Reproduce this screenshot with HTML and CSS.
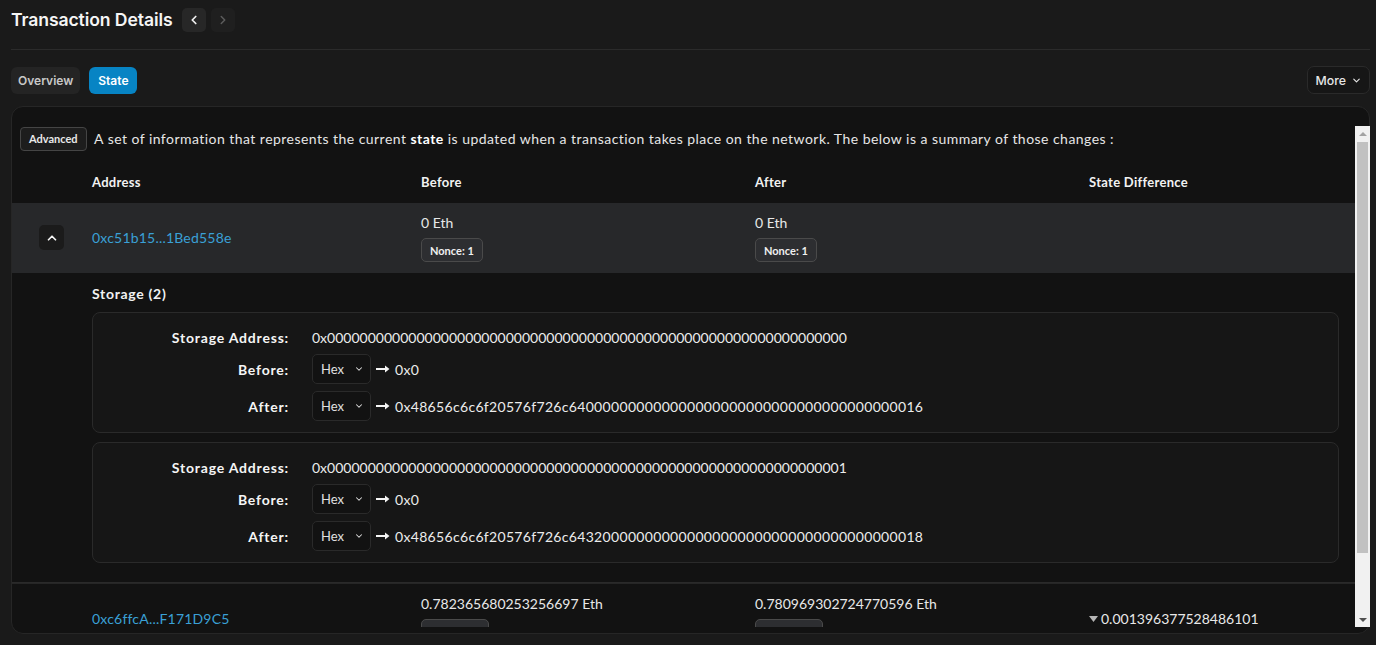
FILE: index.html
```html
<!DOCTYPE html>
<html lang="en">
<head>
<meta charset="utf-8">
<title>Transaction Details</title>
<link rel="stylesheet" href="styles.css">
</head>
<body>
<div class="page">
  <header class="page-head">
    <h1 class="title">Transaction Details</h1>
    <button class="nav-btn">
      <svg width="14" height="14" viewBox="0 0 24 24"><path d="M15 18l-6-6 6-6" fill="none" stroke="currentColor" stroke-width="3" stroke-linecap="round" stroke-linejoin="round"/></svg>
    </button>
    <button class="nav-btn nav-btn-off">
      <svg width="14" height="14" viewBox="0 0 24 24"><path d="M9 18l6-6-6-6" fill="none" stroke="currentColor" stroke-width="2.5" stroke-linecap="round" stroke-linejoin="round"/></svg>
    </button>
  </header>

  <div class="tabs-row">
    <div class="tabs">
      <button class="tab">Overview</button>
      <button class="tab tab-active">State</button>
    </div>
    <button class="more">More
      <svg width="11" height="11" viewBox="0 0 24 24"><path d="M6 9l6 6 6-6" fill="none" stroke="currentColor" stroke-width="2.5" stroke-linecap="round" stroke-linejoin="round"/></svg>
    </button>
  </div>

  <section class="card">
    <div class="card-body">
      <div class="scroll">
        <p class="intro"><span class="badge">Advanced</span> A set of information that represents the current <b>state</b> is updated when a transaction takes place on the network. The below is a summary of those changes :</p>

        <div class="grid head-row">
          <div></div>
          <div>Address</div>
          <div>Before</div>
          <div>After</div>
          <div>State Difference</div>
        </div>

        <div class="grid acc-row acc-open">
          <div class="cell-center">
            <button class="expand">
              <svg width="14" height="14" viewBox="0 0 24 24"><path d="M18 15l-6-6-6 6" fill="none" stroke="currentColor" stroke-width="3" stroke-linecap="round" stroke-linejoin="round"/></svg>
            </button>
          </div>
          <div class="cell-mid"><a class="addr">0xc51b15...1Bed558e</a></div>
          <div class="val-cell"><span>0 Eth</span><span class="nonce">Nonce: 1</span></div>
          <div class="val-cell"><span>0 Eth</span><span class="nonce">Nonce: 1</span></div>
          <div></div>
        </div>

        <div class="storage">
          <h3 class="storage-title">Storage (2)</h3>

          <div class="slot">
            <div class="slot-row"><span class="lbl">Storage Address:</span><span>0x0000000000000000000000000000000000000000000000000000000000000000</span></div>
            <div class="slot-row"><span class="lbl">Before:</span>
              <span class="hex">Hex<svg width="10" height="10" viewBox="0 0 24 24"><path d="M6 9l6 6 6-6" fill="none" stroke="currentColor" stroke-width="2.5" stroke-linecap="round" stroke-linejoin="round"/></svg></span>
              <svg class="arrow" width="16" height="10" viewBox="0 0 16 10"><path d="M1 5h12" stroke="currentColor" stroke-width="2"/><path d="M10 1.5L14.5 5 10 8.5z" fill="currentColor"/></svg>
              <span class="hexval">0x0</span></div>
            <div class="slot-row"><span class="lbl">After:</span>
              <span class="hex">Hex<svg width="10" height="10" viewBox="0 0 24 24"><path d="M6 9l6 6 6-6" fill="none" stroke="currentColor" stroke-width="2.5" stroke-linecap="round" stroke-linejoin="round"/></svg></span>
              <svg class="arrow" width="16" height="10" viewBox="0 0 16 10"><path d="M1 5h12" stroke="currentColor" stroke-width="2"/><path d="M10 1.5L14.5 5 10 8.5z" fill="currentColor"/></svg>
              <span class="hexval">0x48656c6c6f20576f726c640000000000000000000000000000000000000016</span></div>
          </div>

          <div class="slot">
            <div class="slot-row"><span class="lbl">Storage Address:</span><span>0x0000000000000000000000000000000000000000000000000000000000000001</span></div>
            <div class="slot-row"><span class="lbl">Before:</span>
              <span class="hex">Hex<svg width="10" height="10" viewBox="0 0 24 24"><path d="M6 9l6 6 6-6" fill="none" stroke="currentColor" stroke-width="2.5" stroke-linecap="round" stroke-linejoin="round"/></svg></span>
              <svg class="arrow" width="16" height="10" viewBox="0 0 16 10"><path d="M1 5h12" stroke="currentColor" stroke-width="2"/><path d="M10 1.5L14.5 5 10 8.5z" fill="currentColor"/></svg>
              <span class="hexval">0x0</span></div>
            <div class="slot-row"><span class="lbl">After:</span>
              <span class="hex">Hex<svg width="10" height="10" viewBox="0 0 24 24"><path d="M6 9l6 6 6-6" fill="none" stroke="currentColor" stroke-width="2.5" stroke-linecap="round" stroke-linejoin="round"/></svg></span>
              <svg class="arrow" width="16" height="10" viewBox="0 0 16 10"><path d="M1 5h12" stroke="currentColor" stroke-width="2"/><path d="M10 1.5L14.5 5 10 8.5z" fill="currentColor"/></svg>
              <span class="hexval">0x48656c6c6f20576f726c643200000000000000000000000000000000000018</span></div>
          </div>
        </div>

        <div class="grid acc-row">
          <div></div>
          <div class="cell-mid"><a class="addr">0xc6ffcA...F171D9C5</a></div>
          <div class="val-cell"><span>0.782365680253256697 Eth</span><span class="nonce">Nonce: 33</span></div>
          <div class="val-cell"><span>0.780969302724770596 Eth</span><span class="nonce">Nonce: 34</span></div>
          <div class="cell-mid"><span class="diff"><svg width="9" height="6" viewBox="0 0 9 6"><path d="M0 0h9L4.5 6z" fill="#b5b5b5"/></svg>0.001396377528486101</span></div>
        </div>

        <div class="grid acc-row">
          <div></div>
          <div class="cell-mid"><a class="addr">0x95222290...4fD69F5</a></div>
          <div class="val-cell"><span>20.1012 Eth</span><span class="nonce">Nonce: 1</span></div>
          <div class="val-cell"><span>20.1013 Eth</span><span class="nonce">Nonce: 1</span></div>
          <div></div>
        </div>
      </div>

      <div class="scrollbar" aria-hidden="true">
        <div class="sb-btn sb-up"><svg width="8" height="4" viewBox="0 0 8 4"><path d="M0 4L4 0 8 4z" fill="#a3a3a3"/></svg></div>
        <div class="sb-track"><div class="sb-thumb"></div></div>
        <div class="sb-btn sb-down"><svg width="8" height="4" viewBox="0 0 8 4"><path d="M0 0h8L4 4z" fill="#505050"/></svg></div>
      </div>
    </div>
  </section>
</div>
</body>
</html>
```

FILE: styles.css
```css
* { box-sizing: border-box; }

html, body {
  margin: 0;
  padding: 0;
  background: #1a1a1a;
  color: #e8e8e8;
  overflow: hidden;
}

body {
  font-family: "Lato", "Open Sans", sans-serif;
  font-size: 14px;
}

button {
  font: inherit;
  color: inherit;
  border: 0;
  cursor: pointer;
}

.page {
  padding: 0 6px 0 11px;
}

.page-head {
  display: flex;
  align-items: center;
  gap: 5px;
  height: 50px;
  padding-bottom: 10px;
  border-bottom: 1px solid #2b2b2b;
}

.title {
  margin: 0 4px 0 0;
  font-family: "Inter", sans-serif;
  font-weight: 600;
  font-size: 17.6px;
  color: #f5f5f5;
  letter-spacing: -0.1px;
}

.nav-btn {
  width: 24px;
  height: 24px;
  border-radius: 5px;
  background: #272727;
  color: #f0f0f0;
  display: flex;
  align-items: center;
  justify-content: center;
  padding: 0;
}

.nav-btn-off {
  background: #1f1f1f;
  color: #5c5c5c;
}

.tabs-row {
  display: flex;
  justify-content: space-between;
  align-items: center;
  margin-top: 16px;
}

.tabs {
  display: flex;
  gap: 9px;
}

.tab {
  height: 27px;
  padding: 0 7px;
  border-radius: 6px;
  background: #242424;
  color: #c8c8c8;
  font-family: "Inter", sans-serif;
  font-weight: 600;
  font-size: 12px;
}

.tab-active {
  background: #0784c4;
  color: #ffffff;
  padding: 0 9px;
}

.more {
  height: 28px;
  padding: 0 7px 0 8px;
  border-radius: 7px;
  background: #161616;
  border: 1px solid #2a2a2a;
  color: #e6e6e6;
  font-family: "Inter", sans-serif;
  font-weight: 500;
  font-size: 12.3px;
  display: flex;
  align-items: center;
  gap: 5px;
}

.card {
  margin-top: 12px;
  height: 528px;
  background: #121212;
  border: 1px solid #262626;
  border-radius: 12px;
  padding: 19px 0 6px 0;
}

.card-body {
  display: flex;
  height: 501px;
  margin-right: -1px;
}

.scroll {
  flex: 1;
  min-width: 0;
  overflow: hidden;
}

.scrollbar {
  width: 15px;
  flex: none;
  display: flex;
  flex-direction: column;
  background: #f1f1f1;
}

.sb-btn {
  height: 15px;
  flex: none;
  display: flex;
  align-items: center;
  justify-content: center;
}

.sb-track {
  flex: 1;
  padding: 1px 2px 59px;
}

.sb-thumb {
  height: 100%;
  background: #c1c1c1;
}

.intro {
  margin: 1px 0 0 8px;
  line-height: 24px;
  color: #e6e6e6;
  letter-spacing: 0.46px;
}

.intro b {
  font-weight: 700;
  color: #ffffff;
}

.badge {
  display: inline-flex;
  align-items: center;
  vertical-align: top;
  height: 24px;
  padding: 0 8px;
  margin-right: 4px;
  border: 1px solid #454545;
  border-radius: 4px;
  background: #1d1d1d;
  font-size: 11px;
  font-weight: 700;
  color: #e8e8e8;
  letter-spacing: 0;
}

.grid {
  display: grid;
  grid-template-columns: 80px 329px 334px 334px 1fr;
}

.head-row {
  margin-top: 10px;
  height: 42px;
  align-items: center;
  font-size: 13px;
  font-weight: 700;
  color: #f2f2f2;
  letter-spacing: 0.3px;
}

.acc-row {
  border-top: 1px solid #262626;
  padding: 10px 0 11px;
}

.acc-open {
  background: #27282a;
  border-top: 0;
  height: 70px;
}

.cell-center {
  display: flex;
  align-items: center;
  justify-content: center;
  padding-right: 1px;
}

.cell-mid {
  display: flex;
  align-items: center;
}

.expand {
  width: 25px;
  height: 25px;
  border-radius: 5px;
  background: #1b1b1b;
  color: #f5f5f5;
  display: flex;
  align-items: center;
  justify-content: center;
  padding: 0;
}

.addr {
  color: #3aa0d6;
  text-decoration: none;
  font-size: 14px;
  letter-spacing: 0.2px;
}

.val-cell {
  display: flex;
  flex-direction: column;
  align-items: flex-start;
  gap: 5px;
  line-height: 20px;
}

.nonce {
  display: inline-flex;
  align-items: center;
  height: 24px;
  padding: 0 8px;
  border: 1px solid #4a4a4a;
  border-radius: 5px;
  background: #2d2e31;
  font-size: 11px;
  font-weight: 700;
  line-height: 1;
  color: #f0f0f0;
}

.diff {
  display: inline-flex;
  align-items: center;
  gap: 3px;
}

.storage {
  padding: 12px 16px 19px 80px;
  border-bottom: 1px solid #2a2a2a;
}

.storage-title {
  margin: 0 0 9px;
  font-size: 14px;
  font-weight: 700;
  line-height: 18px;
  color: #f2f2f2;
  letter-spacing: 0.7px;
}

.slot {
  display: flex;
  flex-direction: column;
  gap: 7px;
  padding: 14px 0 11px;
  border: 1px solid #2a2a2a;
  border-radius: 8px;
  background: #161616;
  margin-bottom: 9px;
}

.slot:last-child {
  margin-bottom: 0;
}

.slot-row {
  display: flex;
  align-items: center;
  gap: 4px;
  min-height: 20px;
  color: #ececec;
}

.lbl {
  width: 219px;
  padding-right: 23px;
  margin-right: -4px;
  text-align: right;
  font-weight: 700;
  color: #f5f5f5;
  letter-spacing: 0.8px;
}

.hexval {
  letter-spacing: 0.32px;
}

.hex {
  display: inline-flex;
  align-items: center;
  justify-content: space-between;
  width: 59px;
  height: 30px;
  padding: 0 6px 0 8px;
  border: 1px solid #2a2a2a;
  border-radius: 5px;
  background: #121212;
  font-size: 13px;
  color: #e0e0e0;
}

.arrow {
  color: #f5f5f5;
}
```
